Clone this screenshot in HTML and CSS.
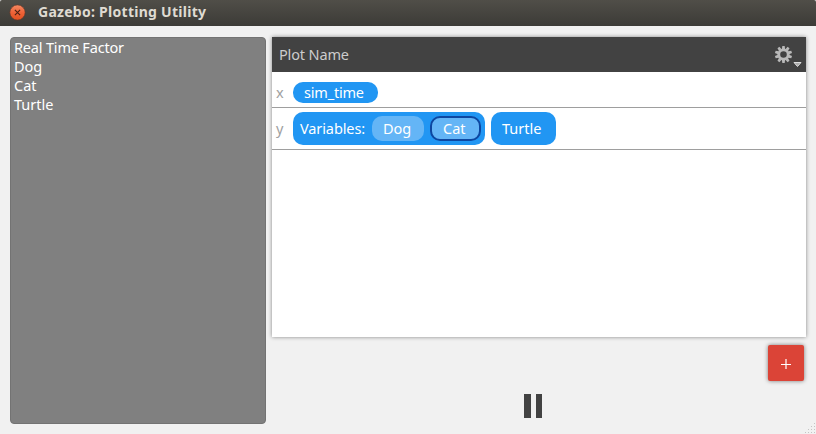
FILE: index.html
```html
<!DOCTYPE html>
<html lang="en">
<head>
<meta charset="utf-8">
<title>Gazebo: Plotting Utility</title>
<link rel="stylesheet" href="styles.css">
</head>
<body>
<header class="titlebar">
  <svg class="close" width="17" height="17" viewBox="0 0 17 17">
    <defs><linearGradient id="orange" x1="0" y1="0" x2="0" y2="1"><stop offset="0" stop-color="#f68b64"/><stop offset=".5" stop-color="#ee6338"/><stop offset="1" stop-color="#e1501f"/></linearGradient></defs>
    <circle cx="8.5" cy="8.5" r="7.6" fill="url(#orange)" stroke="#6b3826" stroke-width=".6"/>
    <path d="M5.9 5.9l5.2 5.2M11.1 5.9l-5.2 5.2" stroke="#4a2013" stroke-width="1.1"/>
  </svg>
  <h1 class="title">Gazebo: Plotting Utility</h1>
</header>
<main class="content">
  <ul class="topics">
    <li class="factor">Real Time Factor</li>
    <li>Dog</li>
    <li>Cat</li>
    <li>Turtle</li>
  </ul>
  <section class="workspace">
    <div class="plot">
      <div class="plot-header">
        <span class="plot-name">Plot Name</span>
        <svg class="gear" width="28" height="24" viewBox="0 0 28 24">
          <g fill="#b9b9b9" transform="translate(9.5 9.5)">
            <circle r="4.7" fill="none" stroke="#b9b9b9" stroke-width="2.8"/>
            <g id="teeth">
              <path id="tooth" d="M-1.6-5.4L-1.2-8.6H1.2L1.6-5.4z"/>
              <use href="#tooth" transform="rotate(36)"/><use href="#tooth" transform="rotate(72)"/>
              <use href="#tooth" transform="rotate(108)"/><use href="#tooth" transform="rotate(144)"/>
            </g>
            <use href="#teeth" transform="rotate(180)"/>
          </g>
          <path d="M20 17.5h7L23.5 21.5z" fill="#aaa" stroke="#ddd" stroke-width="1"/>
        </svg>
      </div>
      <div class="axis axis-x"><span class="axis-label">x</span><span class="chip sim"><span>sim_time</span></span></div>
      <div class="axis axis-y">
        <span class="axis-label">y</span>
        <div class="chip group"><span class="variables">Variables:</span><span class="variable v-dog"><span>Dog</span></span><span class="variable selected"><span>Cat</span></span></div>
        <span class="chip single"><span>Turtle</span></span>
      </div>
    </div>
    <button class="add" aria-label="Add plot"><svg width="12" height="12" viewBox="0 0 12 12"><path d="M6 1v10M1 6.5h10" stroke="#fff" stroke-width="1.2"/></svg></button>
    <div class="pause"><i></i><i></i></div>
  </section>
</main>
<svg class="grip" width="12" height="12" viewBox="0 0 12 12"><path d="M10 1.5h1M7 4.5h1m2 0h1M4 7.5h1m2 0h1m2 0h1M1 10.5h1m2 0h1m2 0h1m2 0h1" stroke="#c4c4c4"/></svg>
</body>
</html>
```
FILE: styles.css
```css
* { box-sizing: border-box; }
body {
  margin: 0;
  width: 816px;
  height: 434px;
  overflow: hidden;
  background: #f1f1f1;
  font: 14.5px/19px "Noto Sans", "Open Sans", sans-serif;
}
.titlebar {
  display: flex;
  align-items: center;
  height: 26px;
  padding: 0 9px 1px;
  background: linear-gradient(#504e48, #3c3b37);
  border-radius: 2px 2px 0 0;
}
.title {
  margin: -2px 0 0 12px;
  font-size: 14px;
  line-height: 20px;
  color: #dfdbd2;
  letter-spacing: .27px;
}
.content { display: flex; gap: 6px; padding: 11px 10px 10px; height: 408px; }
.topics {
  width: 256px;
  margin: 0;
  padding: 0 3px;
  list-style: none;
  background: #808080;
  border: 1px solid #737373;
  border-radius: 4px;
  color: #fff;
}
.factor { letter-spacing: -.18px; }
.workspace { display: flex; flex-direction: column; width: 534px; }
.plot { height: 300px; background: #fff; box-shadow: 0 0 4px rgba(0,0,0,.45); }
.plot-header {
  display: flex;
  align-items: center;
  justify-content: space-between;
  height: 35px;
  padding: 0 4px 0 7px;
  background: #424242;
  color: #ccc;
}
.plot-name { letter-spacing: -.15px; }
.gear { margin-top: 5px; }
.axis { display: flex; align-items: center; padding-left: 4px; color: #a0a0a0; border-bottom: 1px solid #9e9e9e; }
.axis-x { height: 36px; padding-top: 6px; }
.axis-y { height: 42px; }
.axis-label { width: 17px; }
.chip { display: flex; align-items: center; background: #2196f3; color: #fff; border-radius: 10px; white-space: nowrap; }
.sim { width: 85px; height: 21px; padding-left: 11px; letter-spacing: -.2px; }
.group { width: 192px; height: 33px; padding: 0 4px 0 7px; }
.variables { width: 72px; letter-spacing: -.1px; }
.variable { display: flex; align-items: center; height: 25px; padding-left: 11px; background: #64b5f6; border-radius: 10px; }
.v-dog { width: 52px; margin-right: 6px; }
.selected { width: 51px; border: 2px solid #0d47a1; }
.single { width: 65px; height: 33px; margin-left: 6px; padding-left: 11px; }
.add {
  display: flex;
  align-items: center;
  justify-content: center;
  align-self: flex-end;
  width: 36px;
  height: 36px;
  margin: 8px 2px 0 0;
  padding: 2px 0 0;
  background: #db4437;
  border: 0;
  border-radius: 2px;
  box-shadow: 0 0 4px rgba(0,0,0,.5);
}
.pause { display: flex; justify-content: space-between; width: 18px; height: 24px; margin: 13px 0 0 252px; }
.pause i { width: 6.5px; background: #424242; }
.grip { position: absolute; right: 0; bottom: 0; }
```
